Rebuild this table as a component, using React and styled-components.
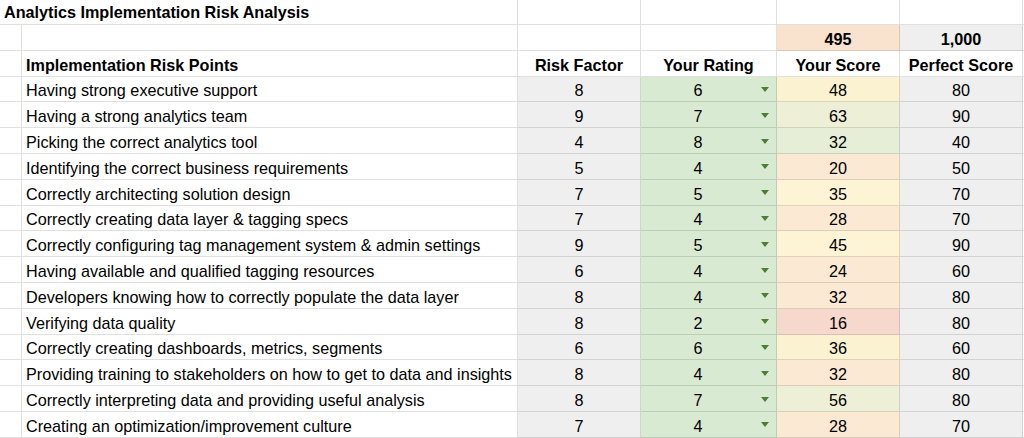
import React from 'react';
import styled, { createGlobalStyle } from 'styled-components';

const GRID_LINE = 'rgba(0, 0, 0, 0.12)';
const COLUMNS = '22px 496px 123px 136px 123px 123px 1fr';

const GlobalStyle = createGlobalStyle`
    body {
        margin: 0;
        background: #ffffff;
    }
`;

const Sheet = styled.div`
    width: 1024px;
    height: 438px;
    overflow: hidden;
    font-family: 'Liberation Sans', Arial, sans-serif;
    font-size: 16.2px;
    color: #000;
`;

const Row = styled.div`
    display: grid;
    grid-template-columns: ${COLUMNS};
    height: ${(p) => p.$h}px;
`;

const Cell = styled.div`
    box-sizing: border-box;
    display: flex;
    align-items: flex-end;
    justify-content: ${(p) => (p.$left ? 'flex-start' : 'center')};
    padding: 0 4px 1px;
    grid-column: span ${(p) => p.$span || 1};
    border-right: 1px solid ${GRID_LINE};
    border-bottom: 1px solid ${GRID_LINE};
    background: ${(p) => p.$bg || '#ffffff'};
    font-weight: ${(p) => (p.$bold ? 700 : 400)};
    white-space: nowrap;
    overflow: hidden;
`;

const TitleCell = styled(Cell)`
    padding-bottom: 2px;
`;

const Value = styled.span`
    flex: 1;
    text-align: center;
`;

const Caret = styled.span`
    align-self: center;
    width: 0;
    height: 0;
    margin: 2px 3px 0 10px;
    border-left: 4.5px solid transparent;
    border-right: 4.5px solid transparent;
    border-top: 5px solid #4e7d34;
`;

const GREY = '#efefef';
const GREEN = '#d9ead3';

const rows = [
    ['Having strong executive support', 8, 6],
    ['Having a strong analytics team', 9, 7],
    ['Picking the correct analytics tool', 4, 8],
    ['Identifying the correct business requirements', 5, 4],
    ['Correctly architecting solution design', 7, 5],
    ['Correctly creating data layer & tagging specs', 7, 4],
    ['Correctly configuring tag management system & admin settings', 9, 5],
    ['Having available and qualified tagging resources', 6, 4],
    ['Developers knowing how to correctly populate the data layer', 8, 4],
    ['Verifying data quality', 8, 2],
    ['Correctly creating dashboards, metrics, segments', 6, 6],
    ['Providing training to stakeholders on how to get to data and insights', 8, 4],
    ['Correctly interpreting data and providing useful analysis', 8, 7],
    ['Creating an optimization/improvement culture', 7, 4],
];

// colour scale on score / perfect score
const scoreTone = (ratio) => {
    if (ratio <= 0.2) return '#f6d9cc';
    if (ratio <= 0.4) return '#fbe9d4';
    if (ratio <= 0.5) return '#fdf3d5';
    if (ratio <= 0.6) return '#fbf2d1';
    if (ratio <= 0.7) return '#edf0d6';
    return '#e6eed8';
};

const fmt = (n) => n.toLocaleString('en-US');

const App = () => {
    const totalScore = rows.reduce((s, [, f, r]) => s + f * r, 0);
    const totalPerfect = rows.reduce((s, [, f]) => s + f * 10, 0);

    return (
        <Sheet>
            <GlobalStyle />
            <Row $h={25}>
                <TitleCell $span={2} $left $bold>
                    Analytics Implementation Risk Analysis
                </TitleCell>
                <Cell />
                <Cell />
                <Cell />
                <Cell />
                <Cell />
            </Row>
            <Row $h={25.8}>
                <Cell />
                <Cell />
                <Cell />
                <Cell />
                <Cell $bg="#f9e3cf" $bold>
                    {fmt(totalScore)}
                </Cell>
                <Cell $bg={GREY} $bold>
                    {fmt(totalPerfect)}
                </Cell>
                <Cell />
            </Row>
            <Row $h={25.8}>
                <Cell />
                <Cell $left $bold>
                    Implementation Risk Points
                </Cell>
                <Cell $bold>Risk Factor</Cell>
                <Cell $bold>Your Rating</Cell>
                <Cell $bold>Your Score</Cell>
                <Cell $bold>Perfect Score</Cell>
                <Cell />
            </Row>
            {rows.map(([label, factor, rating]) => {
                const score = factor * rating;
                const perfect = factor * 10;
                return (
                    <Row $h={25.8} key={label}>
                        <Cell />
                        <Cell $left>{label}</Cell>
                        <Cell $bg={GREY}>{factor}</Cell>
                        <Cell $bg={GREEN}>
                            <Value>{rating}</Value>
                            <Caret />
                        </Cell>
                        <Cell $bg={scoreTone(score / perfect)}>{score}</Cell>
                        <Cell $bg={GREY}>{perfect}</Cell>
                        <Cell />
                    </Row>
                );
            })}
        </Sheet>
    );
};

export default App;
